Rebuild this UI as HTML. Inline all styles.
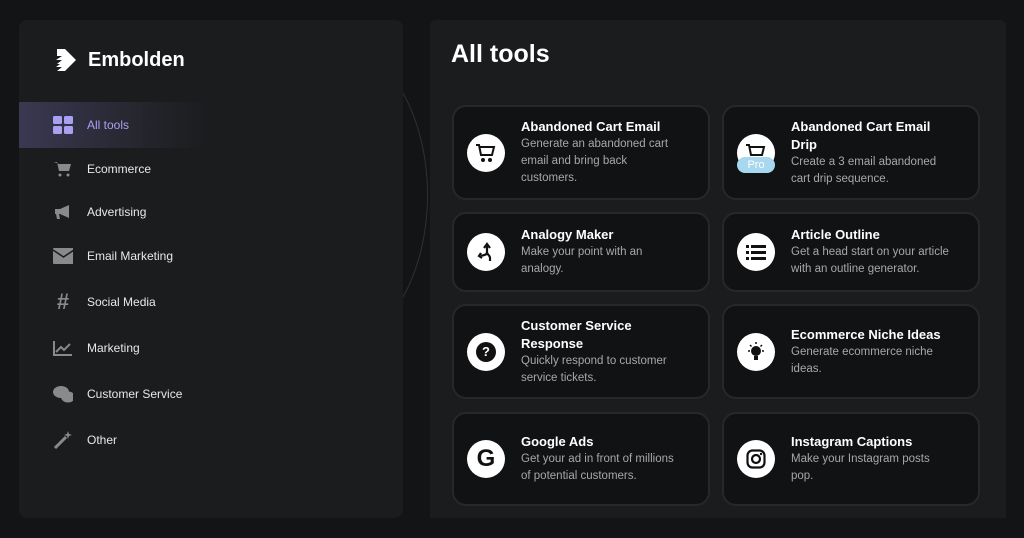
<!DOCTYPE html><html><head><style>
*{margin:0;padding:0;box-sizing:border-box}
body{width:1024px;height:538px;background:#131415;font-family:"Liberation Sans",sans-serif;position:relative;overflow:hidden}
.arc{position:absolute;left:230px;top:40px;width:198px;height:310px;border:1.5px solid #2e3032;border-radius:50%}
.side{position:absolute;left:19px;top:20px;width:384px;height:498px;background:#1a1c1e;border-radius:8px}
.main{position:absolute;left:430px;top:20px;width:576px;height:498px;background:#1a1c1e;border-radius:6px 6px 0 0}
.logo{position:absolute;left:35px;top:27px;color:#fff;font-weight:bold;font-size:20px;display:flex;align-items:center;gap:10px}
.nav{position:absolute;left:0;width:384px;height:46px;display:flex;align-items:center;color:#e8e8e8;font-size:12px}
.nav .ic{width:20px;margin-left:34px;margin-right:14px;display:flex;justify-content:center}
.act{background:linear-gradient(90deg,#3b3852,#23242a 70%,#1a1c1e);color:#a9a0f2;width:190px}
h1{position:absolute;left:21px;top:20px;color:#fff;font-size:25px;font-weight:bold}
.card{position:absolute;width:258px;background:#111213;border:2px solid #262829;border-radius:14px;display:flex;align-items:center}
.circ{width:38px;height:38px;border-radius:50%;background:#fff;margin-left:13px;margin-right:16px;flex:none;display:flex;align-items:center;justify-content:center;position:relative}
.t{color:#fff;font-weight:bold;font-size:13px;line-height:18px}
.d{color:#a8a8a8;font-size:11.5px;line-height:17px}
</style></head><body>
<div class="arc"></div>
<div class="side">
<div class="logo"><svg width="24" height="26" viewBox="0 0 24 26"><path d="M3 2h8l11 11-11 11H3l5-4H2l4-3H3l5-4H2l6-4H3z" fill="#fff"/></svg>Embolden</div>
<div class="nav act" style="top:82px"><span class="ic"><svg width="20" height="18"><rect x="0" y="0" width="9" height="8" rx="1.5" fill="#a9a0f2"/><rect x="11" y="0" width="9" height="8" rx="1.5" fill="#a9a0f2"/><rect x="0" y="10" width="9" height="8" rx="1.5" fill="#a9a0f2"/><rect x="11" y="10" width="9" height="8" rx="1.5" fill="#a9a0f2"/></svg></span>All tools</div>
<div class="nav" style="top:126px"><span class="ic"><svg width="18" height="16"><path d="M0 1h3l2 9h10l2-7H5" fill="#8a8a8a"/><circle cx="6" cy="14" r="1.5" fill="#8a8a8a"/><circle cx="14" cy="14" r="1.5" fill="#8a8a8a"/></svg></span>Ecommerce</div>
<div class="nav" style="top:169px"><span class="ic"><svg width="18" height="16"><path d="M1 5h5l9-4v13l-9-4H5l1 5H3L2 10H1z" fill="#8a8a8a"/></svg></span>Advertising</div>
<div class="nav" style="top:213px"><span class="ic"><svg width="21" height="16"><rect width="21" height="16" rx="1" fill="#8a8a8a"/><path d="M0 2l10.5 7L21 2" stroke="#1a1c1e" stroke-width="1.5" fill="none"/></svg></span>Email Marketing</div>
<div class="nav" style="top:259px"><span class="ic" style="color:#8a8a8a;font-size:22px;font-weight:bold">#</span>Social Media</div>
<div class="nav" style="top:305px"><span class="ic"><svg width="20" height="16"><path d="M1 1v14h18" stroke="#8a8a8a" stroke-width="2" fill="none"/><path d="M3 12l5-5 3 3 6-6" stroke="#8a8a8a" stroke-width="2" fill="none"/></svg></span>Marketing</div>
<div class="nav" style="top:351px"><span class="ic"><svg width="22" height="18"><ellipse cx="8" cy="7" rx="8" ry="6" fill="#8a8a8a"/><ellipse cx="15" cy="12" rx="7" ry="5.5" fill="#8a8a8a"/></svg></span>Customer Service</div>
<div class="nav" style="top:397px"><span class="ic"><svg width="20" height="18"><path d="M2 17L13 6" stroke="#8a8a8a" stroke-width="3"/><path d="M15 0l1 3 3 1-3 1-1 3-1-3-3-1 3-1z" fill="#8a8a8a"/></svg></span>Other</div>
</div>
<div class="main"><h1>All tools</h1></div>

<div class="card" style="left:452px;top:105px;height:95px"><div class="circ"><svg width="22" height="20"><path d="M1 2h3l2 10h11l2-8H5" stroke="#111" stroke-width="2" fill="none"/><circle cx="8" cy="17" r="2" fill="#111"/><circle cx="15" cy="17" r="2" fill="#111"/></svg></div><div><div class="t">Abandoned Cart Email</div><div class="d">Generate an abandoned cart<br>email and bring back<br>customers.</div></div></div>
<div class="card" style="left:722px;top:105px;height:95px"><div class="circ"><svg width="22" height="20"><path d="M1 2h3l2 10h11l2-8H5" stroke="#111" stroke-width="2" fill="none"/></svg><span style="position:absolute;left:0;top:23px;width:38px;height:16px;background:#a7d8ef;border-radius:8px;color:#fff;font-size:11px;text-align:center;line-height:16px">Pro</span></div><div><div class="t">Abandoned Cart Email<br>Drip</div><div class="d">Create a 3 email abandoned<br>cart drip sequence.</div></div></div>

<div class="card" style="left:452px;top:212px;height:80px"><div class="circ"><svg width="20" height="20"><path d="M11 2v8c0 3 3 3 3 6v3M11 10c0 3-3 3-6 4M8 6l3-4 3 4M5 11l-2 3 3 2" stroke="#111" stroke-width="2.2" fill="none"/></svg></div><div><div class="t">Analogy Maker</div><div class="d">Make your point with an<br>analogy.</div></div></div>
<div class="card" style="left:722px;top:212px;height:80px"><div class="circ"><svg width="20" height="16"><g fill="#111"><rect x="0" y="1" width="3" height="3"/><rect x="0" y="7" width="3" height="3"/><rect x="0" y="13" width="3" height="3"/><rect x="5" y="1" width="15" height="3"/><rect x="5" y="7" width="15" height="3"/><rect x="5" y="13" width="15" height="3"/></g></svg></div><div><div class="t">Article Outline</div><div class="d">Get a head start on your article<br>with an outline generator.</div></div></div>

<div class="card" style="left:452px;top:304px;height:95px"><div class="circ"><span style="width:20px;height:20px;border-radius:50%;background:#111;color:#fff;font-weight:bold;font-size:13px;text-align:center;line-height:20px">?</span></div><div><div class="t">Customer Service<br>Response</div><div class="d">Quickly respond to customer<br>service tickets.</div></div></div>
<div class="card" style="left:722px;top:304px;height:95px"><div class="circ"><svg width="20" height="20"><circle cx="10" cy="9" r="5" fill="#111"/><rect x="8" y="14" width="4" height="4" fill="#111"/><path d="M10 0v2M2 9h2M16 9h2M4 3l1.5 1.5M16 3l-1.5 1.5" stroke="#111" stroke-width="1.5"/></svg></div><div><div class="t">Ecommerce Niche Ideas</div><div class="d">Generate ecommerce niche<br>ideas.</div></div></div>

<div class="card" style="left:452px;top:412px;height:94px"><div class="circ"><span style="font-weight:bold;font-size:24px;color:#111">G</span></div><div><div class="t">Google Ads</div><div class="d">Get your ad in front of millions<br>of potential customers.</div></div></div>
<div class="card" style="left:722px;top:412px;height:94px"><div class="circ"><svg width="20" height="20"><rect x="1.5" y="1.5" width="17" height="17" rx="5" stroke="#111" stroke-width="2.2" fill="none"/><circle cx="10" cy="10" r="4" stroke="#111" stroke-width="2.2" fill="none"/><circle cx="15" cy="5" r="1.2" fill="#111"/></svg></div><div><div class="t">Instagram Captions</div><div class="d">Make your Instagram posts<br>pop.</div></div></div>
</body></html>
